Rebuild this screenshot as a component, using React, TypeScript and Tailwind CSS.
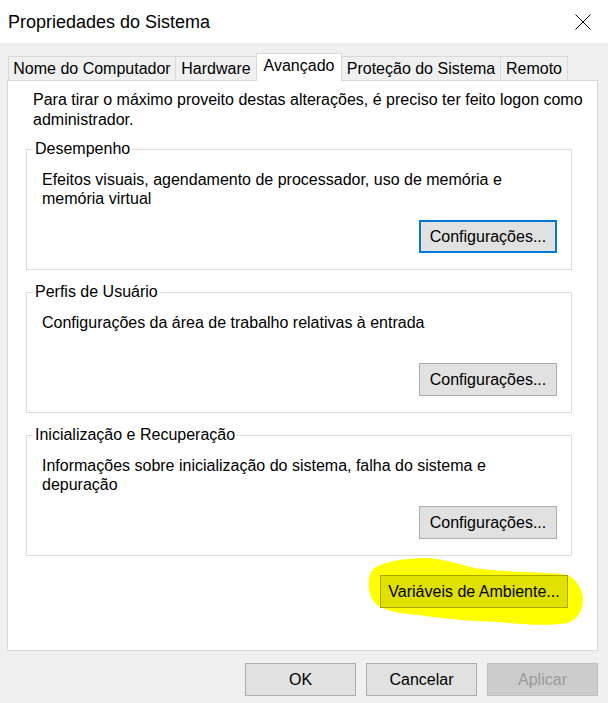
import { ReactNode } from "react";

const tabs = [
  { label: "Nome do Computador", width: "w-[168px]" },
  { label: "Hardware", width: "w-[82px]" },
  { label: "Avançado", width: "w-[86px]", active: true },
  { label: "Proteção do Sistema", width: "w-[160px]" },
  { label: "Remoto", width: "w-[68px]" },
];

function WinButton({
  children,
  className = "",
  variant = "normal",
}: {
  children: ReactNode;
  className?: string;
  variant?: "normal" | "default" | "disabled" | "marked";
}) {
  const styles = {
    normal: "border border-[#adadad] bg-[#e1e1e1] text-black",
    default: "border-2 border-[#0078d7] bg-[#e1e1e1] text-black",
    disabled: "border border-[#bfbfbf] bg-[#cccccc] text-[#9a9a9a]",
    marked: "border border-[#a6a600] bg-[#e1e100] text-black",
  }[variant];

  return (
    <button
      type="button"
      className={`flex h-[33px] items-center justify-center text-[16px] leading-none ${styles} ${className}`}
    >
      {children}
    </button>
  );
}

function GroupBox({
  title,
  text,
  first,
  defaultButton,
}: {
  title: string;
  text: ReactNode;
  first?: boolean;
  defaultButton?: boolean;
}) {
  return (
    <div
      className={`relative ml-[18px] flex h-[121px] w-[546px] flex-col border border-[#dcdcdc] pb-[16px] pl-[15px] pr-[14px] pt-[20px] ${
        first ? "mt-[19px]" : "mt-[22px]"
      }`}
    >
      <span className="absolute left-[6px] top-[-11px] bg-white px-[2px] leading-[20px]">
        {title}
      </span>
      <p className="leading-[19px]">{text}</p>
      <WinButton
        variant={defaultButton ? "default" : "normal"}
        className="mt-auto w-[138px] self-end"
      >
        Configurações...
      </WinButton>
    </div>
  );
}

// yellow marker stroke drawn around the environment variables button
function Highlight() {
  return (
    <svg
      className="pointer-events-none absolute left-[-12px] top-[-18px]"
      width="216"
      height="72"
      viewBox="0 0 216 72"
    >
      <path
        d="M8 10 C18 5 30 2 55 1 C75 1 92 8 112 12 C140 15 170 15 196 17 C207 20 214 30 215 42 C215 53 211 61 200 66 C182 69 160 68 130 65 C100 64 70 61 50 58 C30 56 14 54 6 45 C1 38 0 30 1 22 C2 16 4 12 8 10 Z"
        fill="#ffff00"
      />
    </svg>
  );
}

export default function App() {
  return (
    <div className="h-[703px] w-[608px] overflow-hidden bg-[#f0f0f0] font-['Liberation_Sans',Arial,sans-serif] text-[16px] text-black">
      {/* title bar */}
      <div className="flex h-[43px] items-center justify-between bg-white pl-[8px] pr-[17px]">
        <span className="text-[18px] leading-none">Propriedades do Sistema</span>
        <svg width="16" height="16" viewBox="0 0 16 16" className="mt-[1px]">
          <path d="M0.5 0.5 L15.5 15.5 M15.5 0.5 L0.5 15.5" stroke="#000" strokeWidth="1" />
        </svg>
      </div>

      <div className="px-[7px] pt-[10px]">
        {/* tab strip */}
        <div className="flex h-[27px] items-end pl-[1px]">
          {tabs.map((tab, i) => (
            <div
              key={tab.label}
              className={`flex items-center justify-center border border-b-0 border-[#d9d9d9] ${tab.width} ${
                i > 0 ? "-ml-px" : ""
              } ${
                tab.active
                  ? "relative z-10 mb-[-1px] h-[28px] bg-white pb-[3px]"
                  : "h-[24px] bg-[#f0f0f0]"
              }`}
            >
              {tab.label}
            </div>
          ))}
        </div>

        {/* tab page */}
        <div className="flex h-[571px] w-[591px] flex-col border border-[#d9d9d9] bg-white">
          <p className="pl-[25px] pt-[9px] leading-[20px]">
            Para tirar o máximo proveito destas alterações, é preciso ter feito logon como
            <br />
            administrador.
          </p>

          <GroupBox
            first
            defaultButton
            title="Desempenho"
            text={
              <>
                Efeitos visuais, agendamento de processador, uso de memória e
                <br />
                memória virtual
              </>
            }
          />
          <GroupBox
            title="Perfis de Usuário"
            text="Configurações da área de trabalho relativas à entrada"
          />
          <GroupBox
            title="Inicialização e Recuperação"
            text={
              <>
                Informações sobre inicialização do sistema, falha do sistema e
                <br />
                depuração
              </>
            }
          />

          <div className="mt-[19px] flex justify-end pr-[29px]">
            <div className="relative">
              <Highlight />
              <WinButton variant="marked" className="relative w-[188px]">
                Variáveis de Ambiente...
              </WinButton>
            </div>
          </div>
        </div>
      </div>

      {/* dialog buttons */}
      <div className="mt-[12px] flex justify-end gap-[10px] pr-[10px]">
        <WinButton className="w-[111px]">OK</WinButton>
        <WinButton className="w-[111px]">Cancelar</WinButton>
        <WinButton variant="disabled" className="w-[111px]">
          Aplicar
        </WinButton>
      </div>
    </div>
  );
}
